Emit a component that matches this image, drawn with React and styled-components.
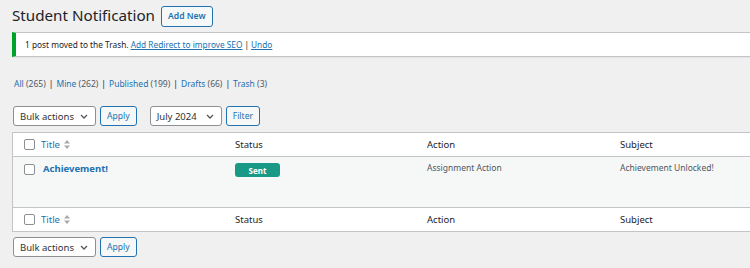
import React from "react";
import styled, { createGlobalStyle } from "styled-components";

const Global = createGlobalStyle`
  html, body {
    margin: 0;
    padding: 0;
    background: #f0f0f1;
    overflow: hidden;
  }
  body {
    font-family: "Noto Sans", "Open Sans", sans-serif;
    font-size: 9px;
    color: #1d2327;
  }
`;

const Wrap = styled.div`
  padding-left: 12px;
  width: calc(100% + 40px);
  box-sizing: border-box;
`;

const HeadRow = styled.div`
  display: flex;
  align-items: center;
  height: 32px;
  gap: 6px;
`;

const PageTitle = styled.h1`
  margin: 0;
  font-size: 15.2px;
  font-weight: 400;
  color: #1d2327;
  line-height: 1;
`;

const OutlineButton = styled.button`
  font-family: inherit;
  font-size: 8.6px;
  height: ${(p) => p.$h || 20}px;
  padding: 0 ${(p) => p.$px || 6}px;
  border: 1px solid #2271b1;
  border-radius: 3px;
  background: #f6f7f7;
  color: #2271b1;
  box-sizing: border-box;
  font-weight: ${(p) => (p.$bold ? 600 : 400)};
`;

const Notice = styled.div`
  height: 25px;
  box-sizing: border-box;
  background: #fff;
  border: 1px solid #c3c4c7;
  border-left: 4px solid #00a32a;
  box-shadow: 0 1px 1px rgba(0, 0, 0, 0.04);
  display: flex;
  align-items: center;
  padding-left: 9px;
  font-size: 8.3px;
`;

const Link = styled.a`
  color: #2271b1;
  text-decoration: ${(p) => (p.$under ? "underline" : "none")};
  font-weight: ${(p) => (p.$bold ? 700 : 400)};
`;

const Sep = styled.span`
  color: #1d2327;
  margin: 0 ${(p) => p.$gap || 0}px;
`;

const SubSub = styled.div`
  margin-top: 19px;
  height: 14px;
  display: flex;
  align-items: center;
  padding-left: 2px;
  font-size: 8.5px;
`;

const Count = styled.span`
  color: #50575e;
`;

const TableNav = styled.div`
  display: flex;
  align-items: center;
  margin-top: ${(p) => p.$mt}px;
  height: 20px;
`;

const Group = styled.div`
  display: flex;
  gap: 4px;
  margin-right: 12px;
  margin-left: 1px;
`;

const Select = styled.div`
  width: ${(p) => p.$w}px;
  height: 20px;
  box-sizing: border-box;
  border: 1px solid #8c8f94;
  border-radius: 3px;
  background: #fff;
  display: flex;
  align-items: center;
  justify-content: space-between;
  padding: 0 7px 0 6px;
  font-size: 9.5px;
  color: #2c3338;
`;

const Table = styled.div`
  margin-top: 6px;
  border: 1px solid #c3c4c7;
  border-right: none;
  background: #fff;
`;

const Row = styled.div`
  display: grid;
  grid-template-columns: 22px 194px 192px 193px 1fr;
  height: ${(p) => p.$h}px;
  background: ${(p) => (p.$alt ? "#f6f7f7" : "#fff")};
  border-top: ${(p) => (p.$top ? "1px solid #c3c4c7" : "none")};
  border-bottom: ${(p) => (p.$bottom ? "1px solid #c3c4c7" : "none")};
  box-sizing: border-box;
`;

const Cell = styled.div`
  display: flex;
  align-items: ${(p) => (p.$start ? "flex-start" : "center")};
  padding: ${(p) => (p.$start ? "5px" : "0")} 6px 0 ${(p) => p.$pl || 6}px;
  font-size: ${(p) => p.$fs || 9.5}px;
  color: ${(p) => p.$color || "#1d2327"};
`;

const CheckCell = styled.div`
  display: flex;
  justify-content: flex-end;
  align-items: ${(p) => (p.$start ? "flex-start" : "center")};
  padding-top: ${(p) => (p.$start ? 7 : 0)}px;
`;

const Check = styled.span`
  width: 11px;
  height: 11px;
  box-sizing: border-box;
  border: 1px solid #8c8f94;
  border-radius: 2px;
  background: #fff;
`;

const SortArrows = styled.svg`
  margin-left: 4px;
`;

const Badge = styled.span`
  display: inline-flex;
  align-items: center;
  justify-content: center;
  width: 45px;
  height: 14px;
  border-radius: 3px;
  background: #1a9a86;
  color: #fff;
  font-size: 8px;
  font-weight: 700;
  margin-top: 1px;
`;

const Chevron = () => (
  <svg width="8" height="5" viewBox="0 0 8 5">
    <path d="M1 1l3 3 3-3" fill="none" stroke="#50575e" strokeWidth="1.3" />
  </svg>
);

const Sort = () => (
  <SortArrows width="6" height="9" viewBox="0 0 6 9">
    <path d="M3 0L6 3.5H0z" fill="#a7aaad" />
    <path d="M3 9L6 5.5H0z" fill="#a7aaad" />
  </SortArrows>
);

const HeaderCells = () => (
  <>
    <CheckCell>
      <Check />
    </CheckCell>
    <Cell>
      <Link href="#">Title</Link>
      <Sort />
    </Cell>
    <Cell>Status</Cell>
    <Cell>Action</Cell>
    <Cell>Subject</Cell>
  </>
);

const BulkBar = ({ mt, filter }) => (
  <TableNav $mt={mt}>
    <Group>
      <Select $w={83}>
        Bulk actions
        <Chevron />
      </Select>
      <OutlineButton>Apply</OutlineButton>
    </Group>
    {filter && (
      <Group>
        <Select $w={72}>
          July 2024
          <Chevron />
        </Select>
        <OutlineButton>Filter</OutlineButton>
      </Group>
    )}
  </TableNav>
);

const App = () => {
  const views = [
    ["All", 265],
    ["Mine", 262],
    ["Published", 199],
    ["Drafts", 66],
    ["Trash", 3],
  ];
  return (
    <Wrap>
      <Global />
      <HeadRow>
        <PageTitle>Student Notification</PageTitle>
        <OutlineButton $h={21} $bold>
          Add New
        </OutlineButton>
      </HeadRow>
      <Notice>
        1 post moved to the Trash.&nbsp;
        <Link href="#" $under>
          Add Redirect to improve SEO
        </Link>
        <Sep $gap={2}>|</Sep>
        <Link href="#" $under>
          Undo
        </Link>
      </Notice>
      <SubSub>
        {views.map(([name, n], i) => (
          <React.Fragment key={name}>
            {i > 0 && <Sep $gap={3}>|</Sep>}
            <Link href="#">{name}</Link>
            <Count>&nbsp;({n})</Count>
          </React.Fragment>
        ))}
      </SubSub>
      <BulkBar mt={16} filter />
      <Table>
        <Row $h={24} $bottom>
          <HeaderCells />
        </Row>
        <Row $h={50} $alt>
          <CheckCell $start>
            <Check />
          </CheckCell>
          <Cell $start $pl={8}>
            <Link href="#" $bold>
              Achievement!
            </Link>
          </Cell>
          <Cell $start>
            <Badge>Sent</Badge>
          </Cell>
          <Cell $start $fs={8.5} $color="#50575e">
            Assignment Action
          </Cell>
          <Cell $start $fs={8.5} $color="#50575e">
            Achievement Unlocked!
          </Cell>
        </Row>
        <Row $h={24} $top>
          <HeaderCells />
        </Row>
      </Table>
      <BulkBar mt={5} />
    </Wrap>
  );
};

export default App;
